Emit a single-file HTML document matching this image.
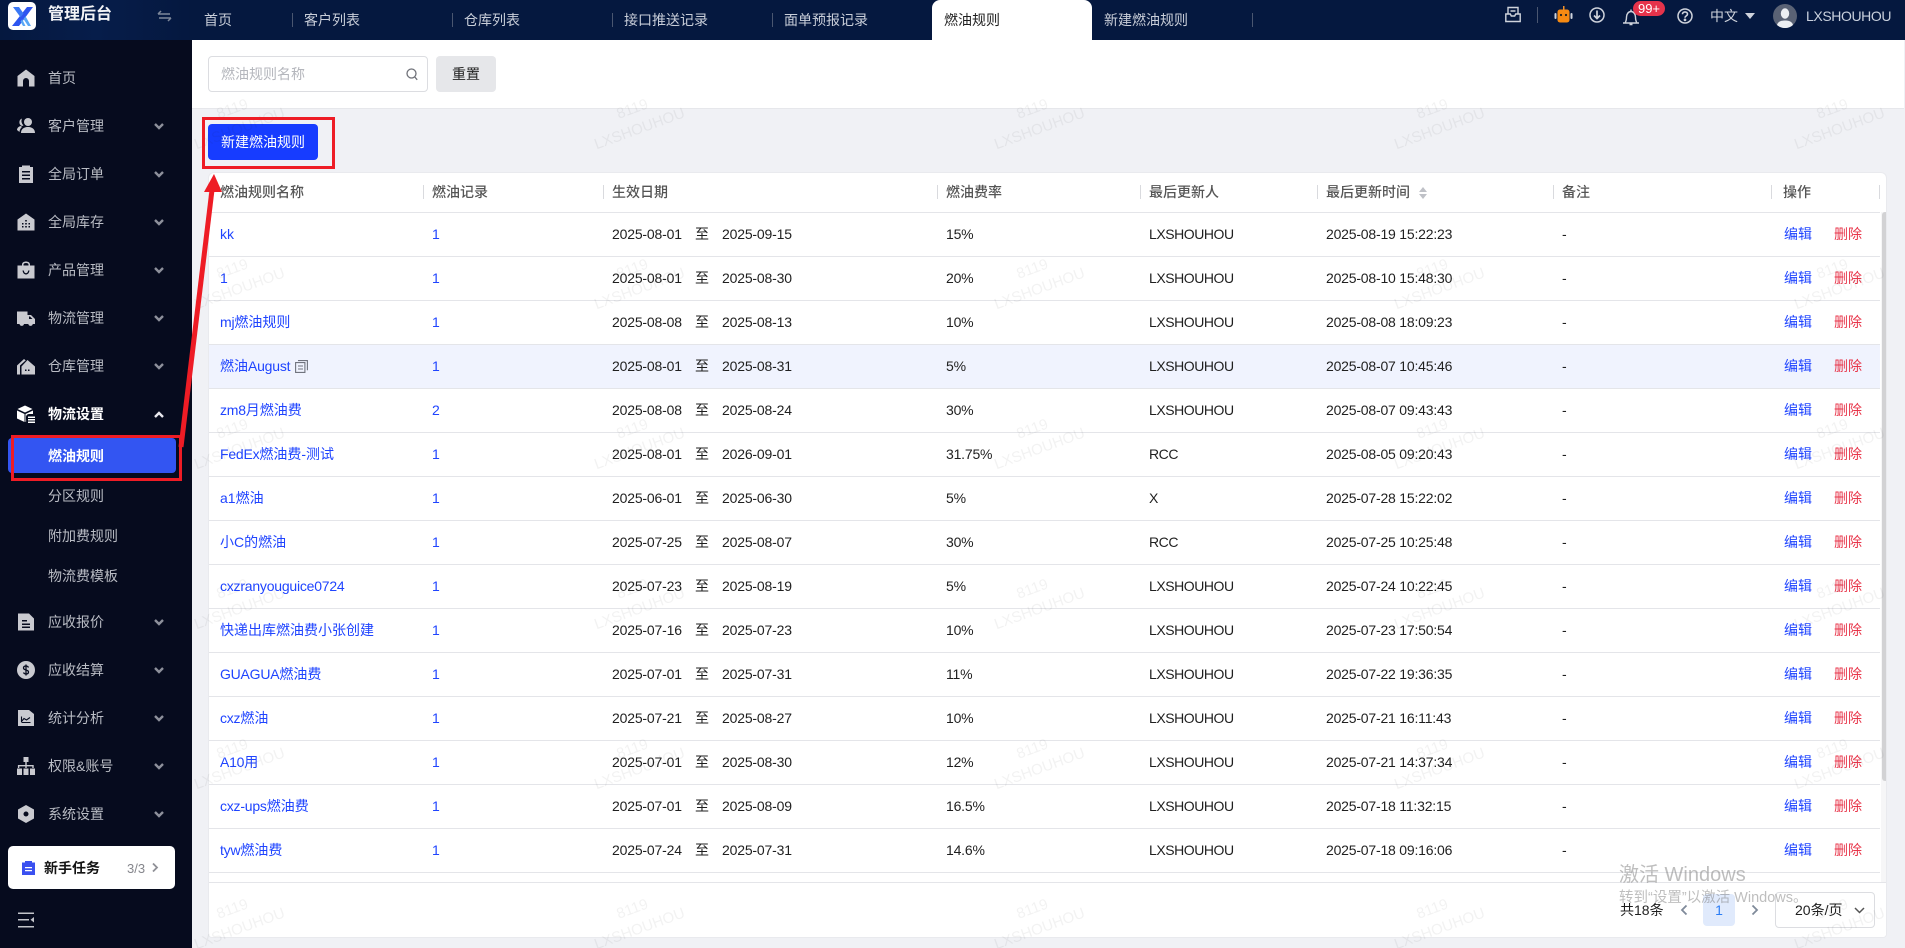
<!DOCTYPE html>
<html lang="zh">
<head>
<meta charset="utf-8">
<title>燃油规则</title>
<style>
*{box-sizing:border-box}
html,body{margin:0;padding:0;width:1905px;height:948px;overflow:hidden;background:#f0f1f5;font-family:"Liberation Sans","Noto Sans CJK SC",sans-serif;font-size:14px;color:#1f1f1f}
#app{position:relative;width:1905px;height:948px;overflow:hidden;background:#f0f1f5}
.abs{position:absolute}
#hd{position:absolute;left:0;top:0;width:1905px;height:40px;background:#05183f}
#hdl{position:absolute;left:0;top:0;width:192px;height:40px;background:linear-gradient(90deg,#05183f,#061d4a 50%,#05183f)}
.tab{position:absolute;top:0;height:40px;line-height:40px;color:#c9ced9;font-size:14px;white-space:nowrap}
.sep{position:absolute;top:13px;width:1px;height:14px;background:#4a5670}
#side{position:absolute;left:0;top:40px;width:192px;height:908px;background:#060b1e}
.mi{position:absolute;left:48px;height:24px;line-height:24px;color:#b9bcc4;font-size:14px;white-space:nowrap}
.ic{position:absolute;left:17px;width:18px;height:18px;fill:#c9cad0}
.ch{position:absolute;left:153px;width:12px;height:8px;fill:none;stroke:#8d909b;stroke-width:2.4}
#filter{position:absolute;left:192px;top:40px;width:1712px;height:69px;background:#fff;border-bottom:1px solid #e6e7eb}
#search{position:absolute;left:208px;top:56px;width:220px;height:36px;border:1px solid #dcdde1;border-radius:4px;background:#fff;line-height:34px;padding-left:12px;color:#b4b6bc;font-size:14px}
#reset{position:absolute;left:436px;top:56px;width:60px;height:36px;border-radius:4px;background:#e6e7ea;text-align:center;line-height:36px;color:#1f1f1f;font-size:14px}
#newb{position:absolute;left:208px;top:124px;width:110px;height:36px;border-radius:4px;background:#173cff;color:#fff;text-align:center;line-height:36px;font-size:14px}
#card{position:absolute;left:208px;top:172px;width:1679px;height:766px;background:#fff;border:1px solid #e9eaee;border-radius:6px 6px 4px 4px;overflow:hidden}
table{position:absolute;left:-1px;top:0;border-collapse:collapse;table-layout:fixed;width:1672px}
th{height:39px;font-weight:500;text-align:left;color:#555;font-size:14px;padding:0 0 0 8px;border-bottom:1px solid #e4e5e9;position:relative}
th:first-child,td:first-child{padding-left:12px}
th i{position:absolute;right:0;top:12px;width:1px;height:14px;background:#d9dade}
td{height:44px;padding:0 0 0 8px;border-bottom:1px solid #e4e5e9;white-space:nowrap;font-size:14px;color:#1f1f1f}
td:nth-child(1),td:nth-child(2){color:#1f44ff}
td:nth-child(4),td:nth-child(6){letter-spacing:-.2px}
td:nth-child(5){letter-spacing:-.45px}
td:nth-child(8){padding-left:12px;color:#1f44ff}
th:nth-child(8){padding-left:11px}
td b{font-weight:400;color:#e8354a;margin-left:22px}
td u{text-decoration:none;display:inline-block}
u.d1{width:83px;letter-spacing:-.18px}u.z{width:27px}
u.d2{letter-spacing:-.18px}
td em{font-style:normal;letter-spacing:-.22px}
tr.hv td{background:#f0f3fe}
#foot{position:absolute;left:0;top:709px;width:1679px;height:56px;background:#fff;border-top:1px solid #e4e5e9}
#track{position:absolute;left:1672px;top:39px;width:7px;height:670px;background:#f6f6f7}
#thumb{position:absolute;left:1673px;top:39px;width:6px;height:569px;background:#d2d2d4;border-radius:3px}
.wm{position:absolute;width:110px;text-align:center;color:rgba(30,30,40,.06);font-size:15px;line-height:21px;transform:rotate(-20deg);pointer-events:none;white-space:nowrap}
</style>
</head>
<body>
<div id="app">
<div id="hd"><div id="hdl"></div></div>
<svg class="abs" style="left:8px;top:2px" width="28" height="28" viewBox="0 0 28 28"><rect width="28" height="28" rx="5" fill="#fff"/><path d="M19 5h6L11 24H4z" fill="#2d55f0"/><path d="M5 5h6l4.500 6.500-3 3.800z" fill="#3a78f5"/><path d="M15.500 17l2-2.700 5.500 9.700h-3z" fill="#5aa7f5"/><path d="M12.500 19.500l1.700-2.200 3.300 6.700h-2.500z" fill="#5aa7f5"/></svg>
<div class="abs" style="left:48px;top:3px;height:24px;line-height:24px;color:#f2f3f6;font-size:16px;font-weight:700">管理后台</div>
<svg class="abs" style="left:157px;top:10px" width="15" height="12" viewBox="0 0 15 12" fill="none" stroke="#7d8799" stroke-width="1.500"><path d="M1 4h12M1 4l3-3M14 8H2M14 8l-3 3"/></svg>
<div class="tab" style="left:204px">首页</div><div class="sep" style="left:292px"></div>
<div class="tab" style="left:304px">客户列表</div><div class="sep" style="left:452px"></div>
<div class="tab" style="left:464px">仓库列表</div><div class="sep" style="left:612px"></div>
<div class="tab" style="left:624px">接口推送记录</div><div class="sep" style="left:772px"></div>
<div class="tab" style="left:784px">面单预报记录</div>
<div class="abs" style="left:932px;top:0;width:160px;height:40px;background:#fff;border-radius:8px 8px 0 0"></div>
<div class="tab" style="left:944px;color:#1f1f1f">燃油规则</div>
<div class="tab" style="left:1104px">新建燃油规则</div><div class="sep" style="left:1252px"></div>

<svg class="abs" style="left:1505px;top:6px" width="16" height="17" viewBox="0 0 16 17" fill="none" stroke="#cfd3dc" stroke-width="1.400"><path d="M3 8V1.500h10V8M.8 8h4.500l1 2h3.400l1-2h4.500v7.500H.8zM5.500 5h5"/></svg>
<div class="sep" style="left:1537px;top:7px;height:16px"></div>
<svg class="abs" style="left:1554px;top:5px" width="19" height="19" viewBox="0 0 19 19"><rect x="9" y="1" width="1.500" height="4" fill="#f0902a"/><rect x="3.500" y="4.500" width="12" height="13" rx="2.500" fill="#f78a12"/><rect x="0.500" y="8" width="2" height="6" rx="1" fill="#cfd3dc"/><rect x="16.500" y="8" width="2" height="6" rx="1" fill="#cfd3dc"/><circle cx="7" cy="10" r="1.100" fill="#222"/><circle cx="12" cy="10" r="1.100" fill="#222"/></svg>
<svg class="abs" style="left:1589px;top:7px" width="16" height="16" viewBox="0 0 16 16" fill="none" stroke="#cfd3dc" stroke-width="1.500"><circle cx="8" cy="8" r="7"/><path d="M8 3.500V11M5 8.500l3 3 3-3" stroke-width="1.700"/></svg>
<svg class="abs" style="left:1622px;top:8px" width="18" height="18" viewBox="0 0 18 18" fill="none" stroke="#cfd3dc" stroke-width="1.400"><path d="M1 15h16M3 15c1-1.500 1.500-3 1.500-6 0-3 2-5.500 4.500-5.500s4.500 2.500 4.500 5.500c0 3 .5 4.500 1.500 6M7.500 16.500h3M9 1.500v2"/></svg>
<div class="abs" style="left:1633px;top:1px;width:32px;height:15px;border-radius:8px;background:#e5334b;color:#fff;font-size:13px;line-height:15px;text-align:center">99+</div>
<svg class="abs" style="left:1677px;top:8px" width="16" height="16" viewBox="0 0 16 16" fill="none" stroke="#cfd3dc" stroke-width="1.500"><circle cx="8" cy="8" r="7"/><path d="M5.500 6.200c0-1.500 1.100-2.300 2.500-2.300s2.500.9 2.500 2.200c0 1.800-2.500 1.700-2.500 3.600" stroke-width="1.600"/><circle cx="8" cy="11.900" r=".6"/></svg>
<div class="abs" style="left:1710px;top:4px;height:24px;line-height:24px;color:#cfd3dc;font-size:14px">中文</div>
<svg class="abs" style="left:1745px;top:13px" width="10" height="6" viewBox="0 0 10 6"><path d="M0 0h10L5 6z" fill="#cfd3dc"/></svg>
<svg class="abs" style="left:1773px;top:4px" width="24" height="24" viewBox="0 0 24 24"><circle cx="12" cy="12" r="12" fill="#5a6275"/><ellipse cx="12" cy="9.500" rx="4.200" ry="5.200" fill="#eceef2"/><path d="M4 21c1-4 5-4.500 8-4.500s7 .5 8 4.500a12 12 0 0 1-16 0z" fill="#eceef2"/></svg>
<div class="abs" style="left:1806px;top:4px;height:24px;line-height:24px;color:#c9d0dd;font-size:14px;letter-spacing:-.4px">LXSHOUHOU</div>

<div id="side"></div>
<!-- menu -->
<svg class="ic" style="top:69px" viewBox="0 0 18 18"><path d="M9 .5 17.500 7v10.500H12V12a3 3 0 0 0-6 0v5.500H.5V7z"/></svg>
<div class="mi" style="top:66px">首页</div>

<svg class="ic" style="top:117px" viewBox="0 0 18 18"><circle cx="11" cy="5" r="4"/><path d="M4 16c0-4 3-6 7-6s7 2 7 6zM5 1.500a4 4 0 0 0 0 7.500l1.500-.5A6 6 0 0 1 5 1.500zM0 13c0-2 1.500-3.500 4-4l1 1a7 7 0 0 0-2.500 5z"/></svg>
<div class="mi" style="top:114px">客户管理</div>
<svg class="ch" style="top:122px" viewBox="0 0 12 8"><path d="M2 2l4 4 4-4"/></svg>

<svg class="ic" style="top:165px" viewBox="0 0 18 18"><path fill-rule="evenodd" d="M2 2h3V.5h8V2h3v16H2zM5 6v1.500h8V6zM5 9.500V11h8V9.500zM5 13v1.500h8V13z"/></svg>
<div class="mi" style="top:162px">全局订单</div>
<svg class="ch" style="top:170px" viewBox="0 0 12 8"><path d="M2 2l4 4 4-4"/></svg>

<svg class="ic" style="top:213px" viewBox="0 0 18 18"><path fill-rule="evenodd" d="M9 .5 17.500 6.500V17.500H.5V6.500zM5 10v1.500h1.500V10zM8.200 10v1.500h1.600V10zM11.500 10v1.500H13V10zM5 13v1.500h1.500V13zM8.200 13v1.500h1.600V13zM11.500 13v1.500H13V13zM8.200 7v1.500h1.600V7z"/></svg>
<div class="mi" style="top:210px">全局库存</div>
<svg class="ch" style="top:218px" viewBox="0 0 12 8"><path d="M2 2l4 4 4-4"/></svg>

<svg class="ic" style="top:261px" viewBox="0 0 18 18"><path fill-rule="evenodd" d="M.5 4.500H5V3.500C5 1.500 7 .5 9 .5s4 1 4 3v1h4.500V17.500H.5zM6.500 4.500h5v-1c0-1-1.200-1.500-2.500-1.500S6.500 2.500 6.500 3.500zM5.500 9.500c.5 3 2 4 3.500 4s3-1 3.500-4h-1.300c-.4 2-1.200 2.700-2.200 2.700s-1.800-.7-2.200-2.700z"/></svg>
<div class="mi" style="top:258px">产品管理</div>
<svg class="ch" style="top:266px" viewBox="0 0 12 8"><path d="M2 2l4 4 4-4"/></svg>

<svg class="ic" style="top:309px" viewBox="0 0 18 18"><path fill-rule="evenodd" d="M0 2.500h10.500V6h3.500l4 4v5h-2.200a2.300 2.300 0 0 1-4.500 0H7a2.300 2.300 0 0 1-4.500 0H0zM12 7.500V10h3.500L13 7.500z"/></svg>
<div class="mi" style="top:306px">物流管理</div>
<svg class="ch" style="top:314px" viewBox="0 0 12 8"><path d="M2 2l4 4 4-4"/></svg>

<svg class="ic" style="top:357px" viewBox="0 0 18 18"><path fill-rule="evenodd" d="M10.500 3 18 9.500V17.500H4.500V9.500zM8 12.500v1.500h1.500v-1.500zM11 12.500v1.500h1.500v-1.500zM0 8.500 7 2l1.700 1.400L3 8.500v9H0z"/></svg>
<div class="mi" style="top:354px">仓库管理</div>
<svg class="ch" style="top:362px" viewBox="0 0 12 8"><path d="M2 2l4 4 4-4"/></svg>

<svg class="ic" style="top:405px;fill:#fff" viewBox="0 0 18 18"><path d="M8 .5 15.500 4 8 7.500.5 4zM0 5.500l7.500 3.500v8L0 13.500zM16 5.500V9h-4a3 3 0 0 0-3 3v2l.2 2.500-.7.500V9z"/><path d="M11 11.500h7V13h-7zM11 14h7v1.500h-7zM11 16.500h7V18h-7z"/></svg>
<div class="mi" style="top:402px;color:#fff;font-weight:700">物流设置</div>
<svg class="ch" style="top:411px;stroke:#e8e8ee" viewBox="0 0 12 8"><path d="M2 6l4-4 4 4"/></svg>

<div class="abs" style="left:8px;top:438px;width:168px;height:35px;background:#3355f2;border-radius:4px"></div>
<div class="mi" style="top:444px;color:#fff;font-weight:700">燃油规则</div>
<div class="mi" style="top:484px">分区规则</div>
<div class="mi" style="top:524px">附加费规则</div>
<div class="mi" style="top:564px">物流费模板</div>

<svg class="ic" style="top:613px" viewBox="0 0 18 18"><path fill-rule="evenodd" d="M1 .5h11l5 5V17.500H1zM5 7v1.500h5V7zM5 10.500V12h8v-1.500zM5 13.500V15h8v-1.500z"/></svg>
<div class="mi" style="top:610px">应收报价</div>
<svg class="ch" style="top:618px" viewBox="0 0 12 8"><path d="M2 2l4 4 4-4"/></svg>

<svg class="ic" style="top:661px" viewBox="0 0 18 18"><circle cx="9" cy="9" r="9"/><path d="M11.500 6.500C11 5.500 10 5 9 5 7.500 5 6.500 5.800 6.500 7s1 1.600 2.500 2 2.500.8 2.500 2S10.500 13 9 13c-1 0-2-.5-2.500-1.500M9 3.500v11" fill="none" stroke="#060b1e" stroke-width="1.300"/></svg>
<div class="mi" style="top:658px">应收结算</div>
<svg class="ch" style="top:666px" viewBox="0 0 12 8"><path d="M2 2l4 4 4-4"/></svg>

<svg class="ic" style="top:709px" viewBox="0 0 18 18"><path d="M1 1h11l5 4v12H1z"/><path d="M4.500 13V7.500M4.500 12.500l2.500-3 2.500 1.500 3.500-2.500M4.500 13.500h9" fill="none" stroke="#060b1e" stroke-width="1.100"/></svg>
<div class="mi" style="top:706px">统计分析</div>
<svg class="ch" style="top:714px" viewBox="0 0 12 8"><path d="M2 2l4 4 4-4"/></svg>

<svg class="ic" style="top:757px" viewBox="0 0 18 18"><path d="M6.500 0h5v5h-5zM8.300 5h1.400v3h7v3h-1.400V9.400H9.700V11H8.300V9.400H2.300V11H.9V8h7.400z"/><path d="M0 11.500h5V18H0zM6.500 11.500h5V18h-5zM13 11.500h5V18h-5z"/></svg>
<div class="mi" style="top:754px">权限&amp;账号</div>
<svg class="ch" style="top:762px" viewBox="0 0 12 8"><path d="M2 2l4 4 4-4"/></svg>

<svg class="ic" style="top:805px" viewBox="0 0 18 18"><path fill-rule="evenodd" d="M9 0l8 4.500v9L9 18l-8-4.500v-9zM9 6.500a2.500 2.500 0 1 0 0 5 2.500 2.500 0 0 0 0-5z"/></svg>
<div class="mi" style="top:802px">系统设置</div>
<svg class="ch" style="top:810px" viewBox="0 0 12 8"><path d="M2 2l4 4 4-4"/></svg>

<div class="abs" style="left:8px;top:846px;width:167px;height:43px;background:#fff;border-radius:5px"></div>
<svg class="abs" style="left:22px;top:861px" width="13" height="14" viewBox="0 0 13 14"><path fill-rule="evenodd" d="M0 1.500h3V0h7v1.500h3V14H0zM3 6v1.300h7V6zM3 9v1.300h7V9z" fill="#3a50f0"/></svg>
<div class="abs" style="left:44px;top:856px;height:24px;line-height:24px;font-size:14px;font-weight:700;color:#141414">新手任务</div>
<div class="abs" style="left:127px;top:857px;height:24px;line-height:24px;font-size:13px;color:#85868c">3/3</div>
<svg class="abs" style="left:151px;top:862px" width="8" height="11" viewBox="0 0 8 11" fill="none" stroke="#8f9096" stroke-width="1.800"><path d="M2 1.500l4 4-4 4"/></svg>
<svg class="abs" style="left:18px;top:912px" width="16" height="16" viewBox="0 0 16 16" fill="#c2c4ca"><path d="M0 .5h16V2H0zM0 7h11v1.500H0zM0 14h16v1.500H0zM16 5v5.500L12.500 7.800z"/></svg>

<!-- main -->
<div id="filter"></div>
<div id="search">燃油规则名称</div>
<svg class="abs" style="left:406px;top:68px" width="12" height="13" viewBox="0 0 12 13" fill="none" stroke="#6f7178" stroke-width="1.300"><circle cx="5.500" cy="5.500" r="4.500"/><path d="M8.800 9l2.400 2.800"/></svg>
<div id="reset">重置</div>
<div id="newb">新建燃油规则</div>

<div id="card">
<table>
<colgroup><col style="width:216px"><col style="width:180px"><col style="width:334px"><col style="width:203px"><col style="width:177px"><col style="width:236px"><col style="width:218px"><col style="width:108px"></colgroup>
<tr><th>燃油规则名称<i></i></th><th>燃油记录<i></i></th><th>生效日期<i></i></th><th>燃油费率<i></i></th><th>最后更新人<i></i></th><th>最后更新时间<svg style="margin-left:8px;vertical-align:-3px" width="10" height="14" viewBox="0 0 10 14" fill="#bfc1c7"><path d="M5 1 9 6H1zM5 13 9 8H1z"/></svg><i></i></th><th>备注<i></i></th><th>操作<i></i></th></tr>
<tr><td>kk</td><td>1</td><td><u class="d1">2025-08-01</u><u class="z">至</u><u class="d2">2025-09-15</u></td><td>15%</td><td>LXSHOUHOU</td><td>2025-08-19 15:22:23</td><td>-</td><td>编辑<b>删除</b></td></tr>
<tr><td>1</td><td>1</td><td><u class="d1">2025-08-01</u><u class="z">至</u><u class="d2">2025-08-30</u></td><td>20%</td><td>LXSHOUHOU</td><td>2025-08-10 15:48:30</td><td>-</td><td>编辑<b>删除</b></td></tr>
<tr><td><em>mj</em>燃油规则</td><td>1</td><td><u class="d1">2025-08-08</u><u class="z">至</u><u class="d2">2025-08-13</u></td><td>10%</td><td>LXSHOUHOU</td><td>2025-08-08 18:09:23</td><td>-</td><td>编辑<b>删除</b></td></tr>
<tr class="hv"><td>燃油<em>August</em> <svg style="vertical-align:-2px;margin-left:1px" width="13" height="13" viewBox="0 0 13 13" fill="none" stroke="#70737d" stroke-width="1.100"><path d="M.6 2.600h9.300v9.800H.6zM3 .6h9.400v9.600M3 6h5M3 9h5"/></svg></td><td>1</td><td><u class="d1">2025-08-01</u><u class="z">至</u><u class="d2">2025-08-31</u></td><td>5%</td><td>LXSHOUHOU</td><td>2025-08-07 10:45:46</td><td>-</td><td>编辑<b>删除</b></td></tr>
<tr><td><em>zm8</em>月燃油费</td><td>2</td><td><u class="d1">2025-08-08</u><u class="z">至</u><u class="d2">2025-08-24</u></td><td>30%</td><td>LXSHOUHOU</td><td>2025-08-07 09:43:43</td><td>-</td><td>编辑<b>删除</b></td></tr>
<tr><td><em>FedEx</em>燃油费-测试</td><td>1</td><td><u class="d1">2025-08-01</u><u class="z">至</u><u class="d2">2026-09-01</u></td><td>31.75%</td><td>RCC</td><td>2025-08-05 09:20:43</td><td>-</td><td>编辑<b>删除</b></td></tr>
<tr><td>a1燃油</td><td>1</td><td><u class="d1">2025-06-01</u><u class="z">至</u><u class="d2">2025-06-30</u></td><td>5%</td><td>X</td><td>2025-07-28 15:22:02</td><td>-</td><td>编辑<b>删除</b></td></tr>
<tr><td>小C的燃油</td><td>1</td><td><u class="d1">2025-07-25</u><u class="z">至</u><u class="d2">2025-08-07</u></td><td>30%</td><td>RCC</td><td>2025-07-25 10:25:48</td><td>-</td><td>编辑<b>删除</b></td></tr>
<tr><td><em>cxzranyouguice0724</em></td><td>1</td><td><u class="d1">2025-07-23</u><u class="z">至</u><u class="d2">2025-08-19</u></td><td>5%</td><td>LXSHOUHOU</td><td>2025-07-24 10:22:45</td><td>-</td><td>编辑<b>删除</b></td></tr>
<tr><td>快递出库燃油费小张创建</td><td>1</td><td><u class="d1">2025-07-16</u><u class="z">至</u><u class="d2">2025-07-23</u></td><td>10%</td><td>LXSHOUHOU</td><td>2025-07-23 17:50:54</td><td>-</td><td>编辑<b>删除</b></td></tr>
<tr><td><em>GUAGUA</em>燃油费</td><td>1</td><td><u class="d1">2025-07-01</u><u class="z">至</u><u class="d2">2025-07-31</u></td><td>11%</td><td>LXSHOUHOU</td><td>2025-07-22 19:36:35</td><td>-</td><td>编辑<b>删除</b></td></tr>
<tr><td><em>cxz</em>燃油</td><td>1</td><td><u class="d1">2025-07-21</u><u class="z">至</u><u class="d2">2025-08-27</u></td><td>10%</td><td>LXSHOUHOU</td><td>2025-07-21 16:11:43</td><td>-</td><td>编辑<b>删除</b></td></tr>
<tr><td><em>A10</em>用</td><td>1</td><td><u class="d1">2025-07-01</u><u class="z">至</u><u class="d2">2025-08-30</u></td><td>12%</td><td>LXSHOUHOU</td><td>2025-07-21 14:37:34</td><td>-</td><td>编辑<b>删除</b></td></tr>
<tr><td><em>cxz-ups</em>燃油费</td><td>1</td><td><u class="d1">2025-07-01</u><u class="z">至</u><u class="d2">2025-08-09</u></td><td>16.5%</td><td>LXSHOUHOU</td><td>2025-07-18 11:32:15</td><td>-</td><td>编辑<b>删除</b></td></tr>
<tr><td><em>tyw</em>燃油费</td><td>1</td><td><u class="d1">2025-07-24</u><u class="z">至</u><u class="d2">2025-07-31</u></td><td>14.6%</td><td>LXSHOUHOU</td><td>2025-07-18 09:16:06</td><td>-</td><td>编辑<b>删除</b></td></tr>
</table>
<div id="track"></div><div id="thumb"></div>
<div id="foot"></div>
</div>

<div class="abs" style="left:1620px;top:898px;height:24px;line-height:24px;font-size:14px;color:#1f1f1f">共18条</div>
<svg class="abs" style="left:1680px;top:904px" width="8" height="12" viewBox="0 0 8 12" fill="none" stroke="#7f8a9a" stroke-width="1.800"><path d="M6.500 1.500 2 6l4.500 4.500"/></svg>
<div class="abs" style="left:1703px;top:894px;width:32px;height:32px;background:#e0eafc;border-radius:4px;text-align:center;line-height:32px;color:#2b7df5;font-size:14px">1</div>
<svg class="abs" style="left:1751px;top:904px" width="8" height="12" viewBox="0 0 8 12" fill="none" stroke="#7f8a9a" stroke-width="1.800"><path d="M1.500 1.500 6 6l-4.500 4.500"/></svg>
<div class="abs" style="left:1775px;top:892px;width:100px;height:36px;border:1px solid #dcdde1;border-radius:4px;line-height:34px;padding-left:19px;font-size:14px;color:#1f1f1f">20条/页</div>
<svg class="abs" style="left:1854px;top:907px" width="11" height="7" viewBox="0 0 11 7" fill="none" stroke="#555" stroke-width="1.500"><path d="M1 1l4.500 4.500L10 1"/></svg>

<!-- watermark -->
<div class="wm" style="left:181px;top:98px">8119<br>LXSHOUHOU</div><div class="wm" style="left:581px;top:98px">8119<br>LXSHOUHOU</div><div class="wm" style="left:981px;top:98px">8119<br>LXSHOUHOU</div><div class="wm" style="left:1381px;top:98px">8119<br>LXSHOUHOU</div><div class="wm" style="left:1781px;top:98px">8119<br>LXSHOUHOU</div>
<div class="wm" style="left:181px;top:258px">8119<br>LXSHOUHOU</div><div class="wm" style="left:581px;top:258px">8119<br>LXSHOUHOU</div><div class="wm" style="left:981px;top:258px">8119<br>LXSHOUHOU</div><div class="wm" style="left:1381px;top:258px">8119<br>LXSHOUHOU</div><div class="wm" style="left:1781px;top:258px">8119<br>LXSHOUHOU</div>
<div class="wm" style="left:181px;top:418px">8119<br>LXSHOUHOU</div><div class="wm" style="left:581px;top:418px">8119<br>LXSHOUHOU</div><div class="wm" style="left:981px;top:418px">8119<br>LXSHOUHOU</div><div class="wm" style="left:1381px;top:418px">8119<br>LXSHOUHOU</div><div class="wm" style="left:1781px;top:418px">8119<br>LXSHOUHOU</div>
<div class="wm" style="left:181px;top:578px">8119<br>LXSHOUHOU</div><div class="wm" style="left:581px;top:578px">8119<br>LXSHOUHOU</div><div class="wm" style="left:981px;top:578px">8119<br>LXSHOUHOU</div><div class="wm" style="left:1381px;top:578px">8119<br>LXSHOUHOU</div><div class="wm" style="left:1781px;top:578px">8119<br>LXSHOUHOU</div>
<div class="wm" style="left:181px;top:738px">8119<br>LXSHOUHOU</div><div class="wm" style="left:581px;top:738px">8119<br>LXSHOUHOU</div><div class="wm" style="left:981px;top:738px">8119<br>LXSHOUHOU</div><div class="wm" style="left:1381px;top:738px">8119<br>LXSHOUHOU</div><div class="wm" style="left:1781px;top:738px">8119<br>LXSHOUHOU</div>
<div class="wm" style="left:181px;top:898px">8119<br>LXSHOUHOU</div><div class="wm" style="left:581px;top:898px">8119<br>LXSHOUHOU</div><div class="wm" style="left:981px;top:898px">8119<br>LXSHOUHOU</div><div class="wm" style="left:1381px;top:898px">8119<br>LXSHOUHOU</div><div class="wm" style="left:1781px;top:898px">8119<br>LXSHOUHOU</div>

<!-- windows activation -->
<div class="abs" style="left:1619px;top:861px;height:28px;line-height:28px;font-size:20px;color:rgba(120,120,120,.48);white-space:nowrap">激活 Windows</div>
<div class="abs" style="left:1619px;top:888px;height:20px;line-height:20px;font-size:14.5px;color:rgba(120,120,120,.48);white-space:nowrap">转到“设置”以激活 Windows。</div>

<!-- red annotations -->
<div class="abs" style="left:202px;top:117px;width:133px;height:52px;border:3px solid #ee1c25"></div>
<div class="abs" style="left:11px;top:435px;width:171px;height:46px;border:3px solid #ee1c25"></div>
<svg class="abs" style="left:170px;top:168px" width="60" height="290" viewBox="0 0 60 290"><path d="M11 279 42 22" stroke="#ee1c25" stroke-width="5" fill="none"/><path d="M44 6 34 24 52 24z" fill="#ee1c25"/></svg>
</div>
</body>
</html>
